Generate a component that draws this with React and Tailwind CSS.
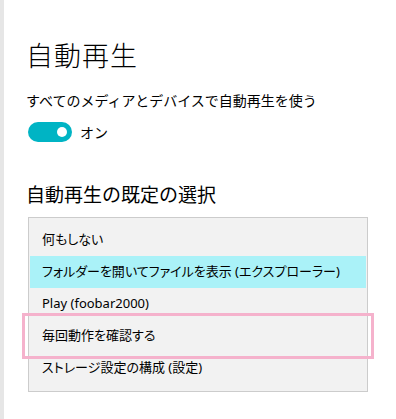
export default function App() {
  const items = [
    "何もしない",
    "フォルダーを開いてファイルを表示 (エクスプローラー)",
    "Play (foobar2000)",
    "毎回動作を確認する",
    "ストレージ設定の構成 (設定)",
  ];
  return (
    <div
      className="w-[396px] h-[419px] bg-white flex overflow-hidden"
      style={{ fontFamily: '"Noto Sans CJK JP", "Noto Sans", sans-serif' }}
    >
      <div className="w-[4px] h-full bg-[#e6e6e6]" />
      <div className="flex-1 flex flex-col pl-[22px] text-black">
        <div className="mt-[37px] text-[27px] leading-[36px] font-light tracking-[1px]">自動再生</div>
        <div className="mt-[17px] text-[14px] leading-[20px]">すべてのメディアとデバイスで自動再生を使う</div>
        <div className="mt-[12px] flex items-center gap-[8px] ml-[2px]">
          <div className="w-[44px] h-[20px] rounded-full bg-[#00b4c4] flex items-center justify-end pr-[5px]">
            <div className="w-[10px] h-[10px] rounded-full bg-white" />
          </div>
          <span className="text-[14px] leading-[20px]">オン</span>
        </div>
        <div className="mt-[39px] text-[19px] leading-[26px]">自動再生の既定の選択</div>
        <div className="relative mt-[10px] ml-[2px] w-[340px] h-[175px] bg-[#f2f2f2] border border-[#cccccc] pt-[6px] px-[1px]">
          {items.map((t, i) => (
            <div
              key={i}
              className={
                "h-[32px] flex items-center pl-[12px] text-[13px] whitespace-nowrap [font-feature-settings:'palt'] [font-family:'Noto_Sans','Noto_Sans_CJK_JP',sans-serif] " +
                (i === 1 ? "bg-[#aaf2f8]" : "")
              }
            >
              {t}
            </div>
          ))}
          <div className="absolute left-[-7px] top-[95px] w-[352px] h-[46px] border-[3px] border-[#f5b2cc]" />
        </div>
      </div>
    </div>
  );
}
